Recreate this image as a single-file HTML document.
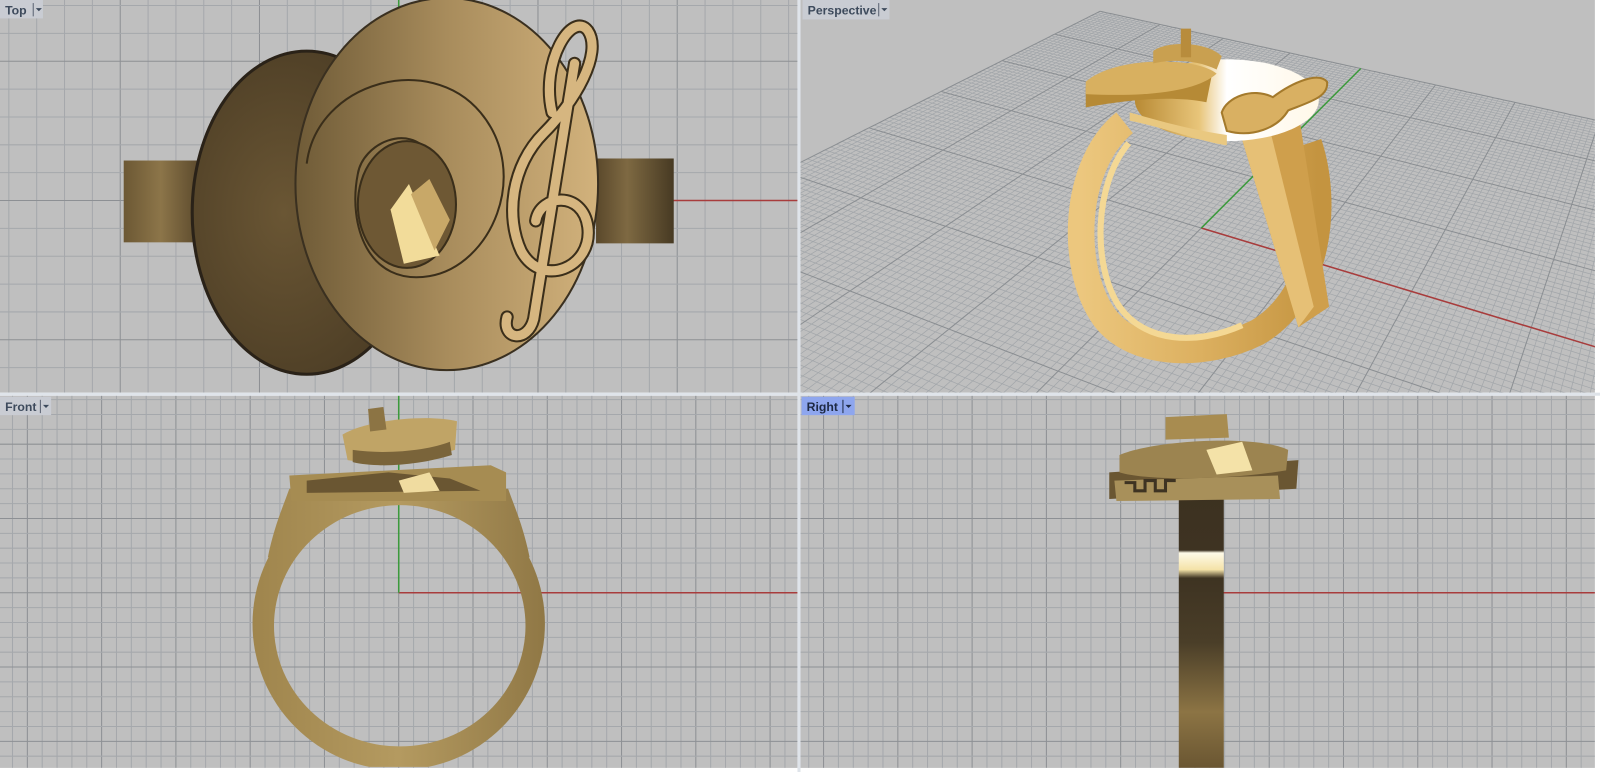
<!DOCTYPE html>
<html><head><meta charset="utf-8"><style>
html,body{margin:0;padding:0;background:#fff;overflow:hidden;width:1600px;height:772px}
#wrap{position:absolute;left:0;top:0;width:1600px;height:772px;overflow:hidden;contain:strict}
svg{display:block;overflow:hidden}
text{font-family:"Liberation Sans",sans-serif;font-size:12px;font-weight:bold;fill:#3d4a5c}
</style></head><body><div id="wrap">
<svg id="s" width="1600" height="772" viewBox="0 0 1565 755" preserveAspectRatio="none" xmlns="http://www.w3.org/2000/svg">
<defs>
<clipPath id="cTL"><rect x="0" y="0" width="780" height="384"/></clipPath>
<clipPath id="cTR"><rect x="783" y="0" width="777" height="384"/></clipPath>
<clipPath id="cBL"><rect x="0" y="387" width="780" height="364"/></clipPath>
<clipPath id="cBR"><rect x="783" y="387" width="777" height="364"/></clipPath>
<mask id="mRing" maskUnits="userSpaceOnUse" x="0" y="387" width="780" height="364">
<path d="M283 478 L497 478 C503 495 512 515 518 545 L262 545 C268 515 277 495 283 478 Z" fill="#fff"/>
<circle cx="390" cy="610" r="143" fill="#fff"/>
<ellipse cx="391" cy="612" rx="123" ry="118" fill="#000"/>
</mask>
<linearGradient id="gDisc" x1="0" x2="1" y1="0" y2="0"><stop offset="0" stop-color="#6f5b37"/><stop offset="0.5" stop-color="#a88c5c"/><stop offset="1" stop-color="#d2b27c"/></linearGradient>
<radialGradient id="gDark" cx="0.4" cy="0.5" r="0.6"><stop offset="0" stop-color="#6a5634"/><stop offset="1" stop-color="#4c3d25"/></radialGradient>
<linearGradient id="gShL" x1="0" x2="1"><stop offset="0" stop-color="#6c5834"/><stop offset="0.5" stop-color="#8c7549"/><stop offset="1" stop-color="#5e4c2e"/></linearGradient>
<linearGradient id="gShR" x1="0" x2="1"><stop offset="0" stop-color="#5a482b"/><stop offset="0.4" stop-color="#7e6942"/><stop offset="1" stop-color="#473a23"/></linearGradient>
<linearGradient id="gFront" x1="0" x2="1"><stop offset="0" stop-color="#9e844c"/><stop offset="0.5" stop-color="#b49a60"/><stop offset="1" stop-color="#8e7644"/></linearGradient>
<linearGradient id="gRB" x1="0" x2="0" y1="0" y2="1"><stop offset="0" stop-color="#3c3120"/><stop offset="0.22" stop-color="#3e3322"/><stop offset="0.23" stop-color="#fffbe8"/><stop offset="0.29" stop-color="#f4e2a8"/><stop offset="0.32" stop-color="#3e3322"/><stop offset="0.55" stop-color="#4a3e28"/><stop offset="0.8" stop-color="#8c7444"/><stop offset="1" stop-color="#6a5632"/></linearGradient>
<linearGradient id="gPB" x1="0" x2="1" y1="0" y2="0"><stop offset="0" stop-color="#ecc77e"/><stop offset="0.5" stop-color="#dcb060"/><stop offset="1" stop-color="#c49440"/></linearGradient>
<linearGradient id="gPTop" x1="0" x2="1"><stop offset="0" stop-color="#b88a34"/><stop offset="0.35" stop-color="#e8c57a"/><stop offset="0.5" stop-color="#ffffff"/><stop offset="1" stop-color="#fff8e8"/></linearGradient>
</defs>
<rect x="0" y="0" width="1565" height="755" fill="#ffffff"/>
<rect x="0" y="0" width="780" height="384" fill="#bfbfbf"/>
<rect x="783" y="0" width="777" height="384" fill="#bfbfbf"/>
<rect x="0" y="387" width="780" height="364" fill="#bfbfbf"/>
<rect x="783" y="387" width="777" height="364" fill="#bfbfbf"/>
<rect x="780" y="0" width="3" height="755" fill="#dfe4ea"/>
<rect x="0" y="384" width="1565" height="3" fill="#dfe4ea"/>

<g id="gTL" clip-path="url(#cTL)"></g>
<g id="gTR" clip-path="url(#cTR)"></g>
<g id="gBL" clip-path="url(#cBL)"></g>
<g id="gBR" clip-path="url(#cBR)"></g>

<g clip-path="url(#cTL)">
<rect x="121" y="157" width="72" height="80" fill="url(#gShL)"/>
<rect x="583" y="155" width="76" height="83" fill="url(#gShR)"/>
<ellipse cx="300" cy="208" rx="112" ry="158" fill="url(#gDark)" stroke="#2a2218" stroke-width="3"/>
<ellipse cx="437" cy="180" rx="148" ry="182" fill="url(#gDisc)" stroke="#3a3020" stroke-width="2"/>
<path d="M300 160 C310 80 420 50 470 110 C520 170 480 260 420 270 C360 280 340 220 350 170 C355 140 400 120 420 150" fill="none" stroke="#3a2e1a" stroke-width="2"/>
<ellipse cx="398" cy="200" rx="48" ry="62" fill="#6e5834" stroke="#3a2e1a" stroke-width="2"/>
<path d="M382 205 L400 180 L430 250 L395 258 Z" fill="#f2dc9a"/>
<path d="M402 190 L420 175 L440 215 L425 245 Z" fill="#c8a868"/>
<path d="M540 110 C528 60 560 10 575 30 C590 52 562 100 532 130 C500 162 494 212 510 246 C530 282 580 262 575 222 C570 186 528 190 524 216 M562 62 L522 312 C516 336 490 332 496 310" fill="none" stroke="#3a2e1a" stroke-width="13" stroke-linecap="round"/>
<path d="M540 110 C528 60 560 10 575 30 C590 52 562 100 532 130 C500 162 494 212 510 246 C530 282 580 262 575 222 C570 186 528 190 524 216 M562 62 L522 312 C516 336 490 332 496 310" fill="none" stroke="#d6b680" stroke-width="9" stroke-linecap="round"/>
</g>

<g clip-path="url(#cTR)">
<path d="M1100 120 C1050 160 1045 260 1080 310 C1110 350 1180 350 1230 325 C1290 290 1300 200 1280 140" fill="none" stroke="url(#gPB)" stroke-width="26"/>
<path d="M1104 140 C1070 180 1068 260 1095 300 C1120 335 1170 338 1215 318" fill="none" stroke="#f4d894" stroke-width="6"/>
<path d="M1210 120 L1270 110 L1300 300 L1270 320 Z" fill="#cf9f4c"/>
<path d="M1210 120 L1240 118 L1285 300 L1270 320 Z" fill="#e6c076"/>
<ellipse cx="1200" cy="98" rx="90" ry="40" fill="url(#gPTop)"/>
<path d="M1062 85 C1080 60 1160 58 1185 75 L1180 100 C1140 92 1090 100 1062 105 Z" fill="#b68a36"/>
<path d="M1062 80 C1090 55 1170 55 1190 72 C1170 90 1120 95 1062 92 Z" fill="#d8b060"/>
<path d="M1105 118 C1140 125 1180 140 1200 142 L1200 132 C1170 128 1140 120 1105 110 Z" fill="#e9c880"/>
<path d="M1128 50 C1140 40 1180 40 1195 55 L1190 68 C1170 58 1145 58 1128 62 Z" fill="#c9a050"/>
<rect x="1155" y="28" width="10" height="28" fill="#b88c3c"/>
<path d="M1195 110 C1200 95 1225 85 1245 95 C1265 80 1290 70 1298 80 C1300 95 1280 100 1260 108 C1250 125 1225 135 1200 128 Z" fill="#d9b062" stroke="#a47a2c" stroke-width="2"/>
</g>

<g clip-path="url(#cBL)">
<rect x="240" y="470" width="300" height="280" fill="url(#gFront)" mask="url(#mRing)"/>
<path d="M283 465 L480 455 L495 462 L495 490 L285 490 Z" fill="#a68c52"/>
<path d="M300 470 L380 462 L440 468 L470 480 L300 482 Z" fill="#6a5632"/>
<path d="M390 470 L420 462 L430 480 L395 482 Z" fill="#f0dca0"/>
<path d="M335 425 C360 410 420 405 447 412 L445 440 C410 450 370 455 340 450 Z" fill="#c0a466"/>
<path d="M360 400 L375 398 L378 420 L362 422 Z" fill="#8c7444"/>
<path d="M345 440 C380 445 420 440 440 432 L442 445 C410 455 370 458 345 452 Z" fill="#7a643a"/>
</g>

<g clip-path="url(#cBR)">
<rect x="1153" y="478" width="44" height="273" fill="url(#gRB)"/>
<path d="M1085 462 L1270 450 L1268 478 L1085 488 Z" fill="#6a5632"/>
<path d="M1090 470 L1250 465 L1252 488 L1092 490 Z" fill="#a8905a"/>
<path d="M1095 445 C1130 430 1230 425 1260 440 L1258 460 C1200 470 1120 470 1095 462 Z" fill="#9c8450"/>
<path d="M1180 440 L1215 432 L1225 460 L1190 464 Z" fill="#f4e2a8"/>
<path d="M1140 408 L1200 405 L1202 428 L1140 430 Z" fill="#a88c50"/>
<path d="M1100 472 L1110 472 L1110 480 L1120 480 L1120 470 L1130 470 L1130 480 L1140 480 L1140 470 L1150 470" fill="none" stroke="#3e3322" stroke-width="3"/>
</g>

<rect x="0" y="0" width="42" height="18" fill="#c9ccd3"/>
<text x="5" y="14">Top</text><rect x="32" y="3" width="1" height="13" fill="#5a6272"/><path d="M35 8 L41 8 L38 11 Z" fill="#3d4a5c"/>
<rect x="785" y="0" width="85" height="19" fill="#c9ccd3"/>
<text x="790" y="14">Perspective</text><rect x="859" y="3" width="1" height="13" fill="#5a6272"/><path d="M862 8 L868 8 L865 11 Z" fill="#3d4a5c"/>
<rect x="0" y="388" width="50" height="18" fill="#c9ccd3"/>
<text x="5" y="402">Front</text><rect x="39" y="391" width="1" height="13" fill="#5a6272"/><path d="M42 396 L48 396 L45 399 Z" fill="#3d4a5c"/>
<rect x="784" y="388" width="52" height="18" fill="#8ea6ee"/>
<text x="789" y="402" style="fill:#1e2a44">Right</text><rect x="824" y="391" width="1" height="13" fill="#1e2a44"/><path d="M827 396 L833 396 L830 399 Z" fill="#1e2a44"/>
</svg></div>
<script>
var NS="http://www.w3.org/2000/svg";
function ln(g,x1,y1,x2,y2,c,w){var l=document.createElementNS(NS,"line");l.setAttribute("x1",x1);l.setAttribute("y1",y1);l.setAttribute("x2",x2);l.setAttribute("y2",y2);l.setAttribute("stroke",c);l.setAttribute("stroke-width",w||1);g.appendChild(l);}
function ortho(id,x0,y0,x1,y1,ox,oy,s,green){
 var g=document.getElementById(id);
 for(var k=Math.ceil((x0-ox)/s);k<=Math.floor((x1-ox)/s);k++){var x=ox+k*s;ln(g,x,y0,x,y1,k%5==0?"#8d9094":"#a5a8ac",1);}
 for(var k=Math.ceil((y0-oy)/s);k<=Math.floor((y1-oy)/s);k++){var y=oy+k*s;ln(g,x0,y,x1,y,k%5==0?"#8d9094":"#a5a8ac",1);}
 ln(g,ox,oy,x1,oy,"#a83c3c",1.5);
 if(green)ln(g,ox,oy,ox,y0,"#3c9a3c",1.5);
}
ortho("gTL",0,0,780,384,390,196.1,27.24,true);
ortho("gBL",0,387,780,751,390,579.7,14.53,true);
ortho("gBR",783,387,1560,751,1168.8,579.7,14.53,false);
function solve(A,b){var n=b.length;for(var i=0;i<n;i++){var m=i;for(var r=i+1;r<n;r++)if(Math.abs(A[r][i])>Math.abs(A[m][i]))m=r;var t=A[i];A[i]=A[m];A[m]=t;t=b[i];b[i]=b[m];b[m]=t;for(var r=i+1;r<n;r++){var f=A[r][i]/A[i][i];for(var c=i;c<n;c++)A[r][c]-=f*A[i][c];b[r]-=f*b[i];}}var x=new Array(n);for(var i=n-1;i>=0;i--){var s=b[i];for(var c=i+1;c<n;c++)s-=A[i][c]*x[c];x[i]=s/A[i][i];}return x;}
var P=[[0,0,1175,223],[0,20,1331,67],[-20,20,1076,11],[-20,0,850,125]];
var A=[],B=[];
P.forEach(function(p){var u=p[0],v=p[1],X=p[2],Y=p[3];A.push([u,v,1,0,0,0,-u*X,-v*X]);B.push(X);A.push([0,0,0,u,v,1,-u*Y,-v*Y]);B.push(Y);});
var h=solve(A,B);
function pr(u,v){var w=h[6]*u+h[7]*v+1;return [(h[0]*u+h[1]*v+h[2])/w,(h[3]*u+h[4]*v+h[5])/w,w];}
function cl(p){return [Math.max(700,Math.min(1650,p[0])),Math.max(-50,Math.min(450,p[1])),p[2]];}
var gp=document.getElementById("gTR");
var N=20;
function seg(fn){var s="",started=false;for(var i=0;i<=160;i++){var t=-N+2*N*i/160;var q=fn(t);if(q[2]<=0.05||Math.abs(q[0])>5000||Math.abs(q[1])>5000){started=false;continue;}s+=(started?"L":"M")+q[0].toFixed(1)+" "+q[1].toFixed(1);started=true;}return s;}
var D=3,dmin="",dmaj="";
for(var k=-D*N;k<=D*N;k++){
 var kk=k/D;
 var a=seg(function(t){return pr(kk,t);}),b=seg(function(t){return pr(t,kk);});
 if(k%(5*D)==0)dmaj+=a+b;else dmin+=a+b;
}
function mk(dd,c,w){var p=document.createElementNS(NS,"path");p.setAttribute("d",dd);p.setAttribute("fill","none");p.setAttribute("stroke",c);p.setAttribute("stroke-width",w);gp.appendChild(p);}
mk(dmin,"#a2a6aa",0.7);mk(dmaj,"#8a8e92",1);
var o=pr(0,0),rx=pr(N,0),gy=pr(0,N);
ln(gp,o[0],o[1],rx[0],rx[1],"#a83c3c",1.5);
ln(gp,o[0],o[1],gy[0],gy[1],"#3c9a3c",1.5);
</script>
</body></html>
